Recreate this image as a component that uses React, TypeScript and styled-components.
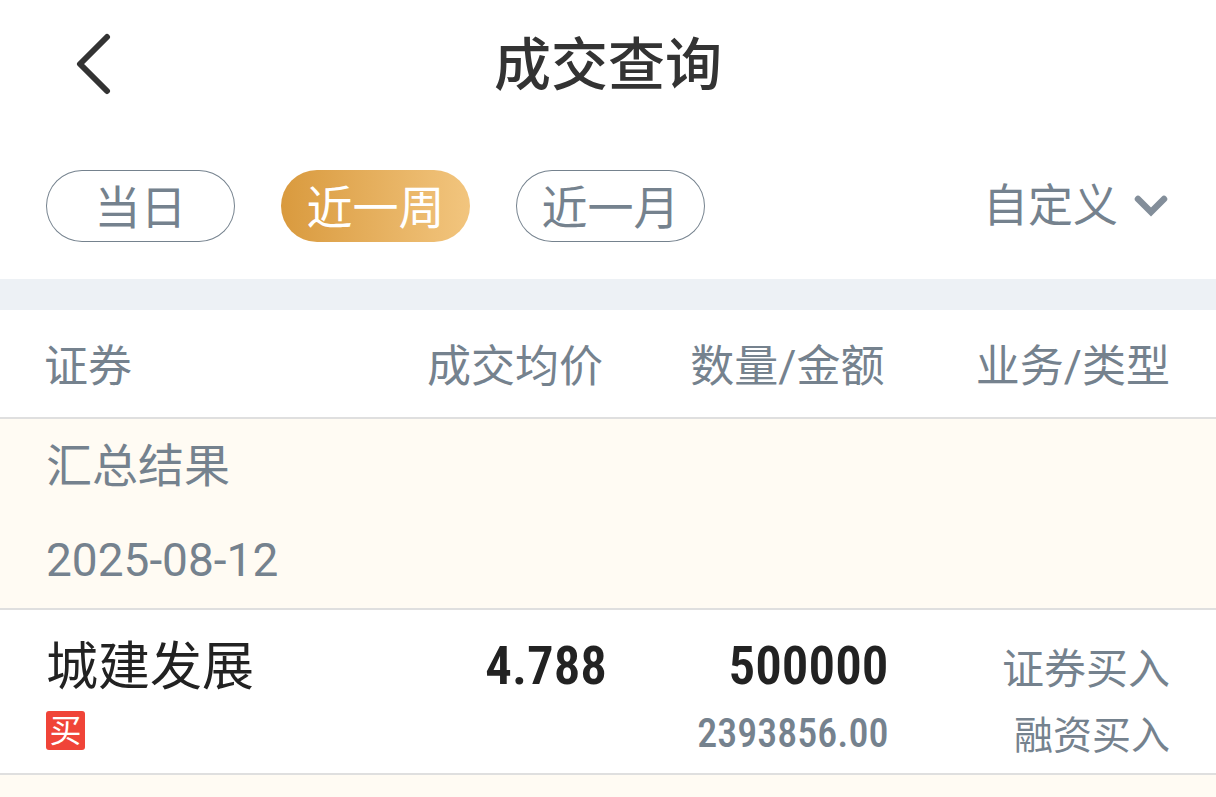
import React, { useState } from "react";
import styled, { createGlobalStyle } from "styled-components";

const GlobalStyle = createGlobalStyle`
  * { box-sizing: border-box; }
  body {
    margin: 0;
    background: #fff;
    color: #75828e;
    font-family: Roboto, "Noto Sans CJK SC", sans-serif;
    overflow-x: hidden;
  }
  button { font: inherit; cursor: pointer; }
`;

const Header = styled.header`
  display: grid;
  grid-template-columns: 144px 1fr 144px;
  align-items: center;
  height: 128px;
`;

const BackButton = styled.button`
  display: flex;
  justify-content: center;
  padding: 0 0 0 42px;
  border: 0;
  background: none;
  color: #333;
`;

const Title = styled.h1`
  margin: 0;
  padding-top: 4px;
  text-align: center;
  font-size: 57px;
  line-height: 80px;
  font-weight: 500;
  color: #333;
`;

const Filters = styled.nav`
  display: flex;
  align-items: center;
  gap: 46px;
  padding: 42px 48px 37px 46px;
`;

const Pill = styled.button<{ $active: boolean }>`
  width: 189px;
  height: 72px;
  padding: 4px 0 0;
  border: 0;
  border-radius: 36px;
  box-shadow: ${(p) => (p.$active ? "none" : "inset 0 0 0 1px #75828e")};
  background: ${(p) => (p.$active ? "linear-gradient(90deg, #d99a3e, #f2c57e)" : "#fff")};
  color: ${(p) => (p.$active ? "#fff" : "#75828e")};
  font-size: 46px;
  line-height: 68px;
`;

const CustomRange = styled.button`
  display: flex;
  align-items: center;
  gap: 16px;
  margin-left: auto;
  padding: 2px 0 0;
  border: 0;
  background: none;
  color: #75828e;
  font-size: 45px;
  line-height: 68px;
`;

const Divider = styled.div`
  height: 31px;
  background: #edf1f5;
`;

const Table = styled.table`
  width: 100%;
  border-collapse: separate;
  border-spacing: 0;
  table-layout: fixed;
`;

const SecurityCol = styled.col`
  width: 30%;
`;

const PriceCol = styled.col`
  width: 23.7%;
`;

const HeadCell = styled.th<{ $start?: boolean }>`
  height: 109px;
  padding: ${(p) => (p.$start ? "0 0 2px 44px" : "0 50px 2px 0")};
  border-bottom: 2px solid #dfdfdf;
  text-align: ${(p) => (p.$start ? "left" : "right")};
  font-size: 44px;
  font-weight: 400;
  white-space: nowrap;

  &:last-child {
    padding-right: 46px;
  }
`;

const SummaryCell = styled.td`
  height: 191px;
  padding: 0 46px;
  border-bottom: 2px solid #dfdfdf;
  background: #fffbf3;
  vertical-align: top;
`;

const SummaryLine = styled.div`
  font-size: 46px;
  line-height: 94px;
`;

const Cell = styled.td<{ $start?: boolean }>`
  height: 165px;
  padding: ${(p) => (p.$start ? "22px 0 0 46px" : "22px 46px 0 0")};
  border-bottom: 2px solid #dfdfdf;
  text-align: ${(p) => (p.$start ? "left" : "right")};
  vertical-align: top;
  white-space: nowrap;
`;

const StockName = styled.div`
  color: #222;
  font-size: 52px;
  line-height: 72px;
`;

const Tag = styled.span`
  display: block;
  width: 39px;
  height: 39px;
  margin-top: 7px;
  border-radius: 3px;
  background: #f04438;
  color: #fff;
  font-size: 32px;
  line-height: 40px;
  text-align: center;
`;

const Figure = styled.div`
  color: #222;
  font-family: "Roboto Condensed", Roboto, sans-serif;
  font-size: 53px;
  font-weight: 600;
  line-height: 68px;
`;

const SubFigure = styled.div`
  font-family: "Roboto Condensed", Roboto, sans-serif;
  font-size: 40px;
  font-weight: 500;
  line-height: 68px;
`;

const Kind = styled.div<{ $small?: boolean }>`
  font-size: ${(p) => (p.$small ? "39px" : "42px")};
  line-height: ${(p) => (p.$small ? "56px" : "76px")};
`;

const NextSummary = styled.div`
  height: 22px;
  background: #fffbf3;
`;

const ranges = ["当日", "近一周", "近一月"];

export default function App() {
  const [range, setRange] = useState("近一周");
  return (
    <>
      <GlobalStyle />
      <Header>
        <BackButton aria-label="返回">
          <svg width="36" height="62" viewBox="0 0 36 62" fill="none" stroke="currentColor" strokeWidth="6">
            <path d="M32 4L5 31L32 58" strokeLinecap="round" strokeLinejoin="round" />
          </svg>
        </BackButton>
        <Title>成交查询</Title>
      </Header>
      <Filters>
        {ranges.map((r) => (
          <Pill key={r} $active={r === range} onClick={() => setRange(r)}>{r}</Pill>
        ))}
        <CustomRange>
          自定义
          <svg width="34" height="24" viewBox="0 0 34 24" fill="none" stroke="#838e9a" strokeWidth="6.5">
            <path d="M4 4L17 17L30 4" strokeLinecap="round" />
          </svg>
        </CustomRange>
      </Filters>
      <Divider />
      <main>
        <Table>
          <colgroup>
            <SecurityCol />
            <PriceCol />
            <col />
            <col />
          </colgroup>
          <thead>
            <tr>
              <HeadCell $start>证券</HeadCell>
              <HeadCell>成交均价</HeadCell>
              <HeadCell>数量/金额</HeadCell>
              <HeadCell>业务/类型</HeadCell>
            </tr>
          </thead>
          <tbody>
            <tr>
              <SummaryCell colSpan={4}>
                <SummaryLine>汇总结果</SummaryLine>
                <SummaryLine>2025-08-12</SummaryLine>
              </SummaryCell>
            </tr>
            <tr>
              <Cell $start>
                <StockName>城建发展</StockName>
                <Tag>买</Tag>
              </Cell>
              <Cell><Figure>4.788</Figure></Cell>
              <Cell>
                <Figure>500000</Figure>
                <SubFigure>2393856.00</SubFigure>
              </Cell>
              <Cell>
                <Kind>证券买入</Kind>
                <Kind $small>融资买入</Kind>
              </Cell>
            </tr>
          </tbody>
        </Table>
        <NextSummary />
      </main>
    </>
  );
}
